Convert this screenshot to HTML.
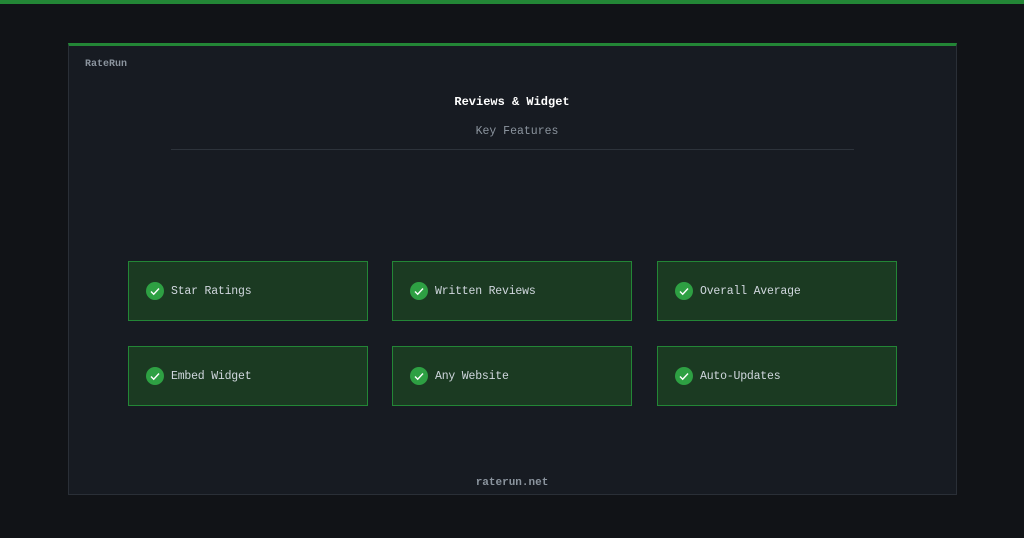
<!DOCTYPE html>
<html><head><style>
body{margin:0;width:1024px;height:538px;background:#111317;font-family:"Liberation Mono",monospace;position:relative;overflow:hidden}
.top{position:absolute;left:0;top:0;width:1024px;height:4px;background:#238636}
.card{position:absolute;left:68px;top:43px;width:887px;height:448px;background:#171b22;border:1px solid #2a2f37;border-top:3px solid #238636;box-sizing:content-box}
.abs{position:absolute;white-space:nowrap}
.box{position:absolute;width:238px;height:58px;background:#1b3a22;border:1px solid #238636}
.box .c{position:absolute;left:17px;top:20px;width:18px;height:18px;border-radius:50%;background:#2ea043}
.box .t{position:absolute;left:42px;top:23px;font-size:11.5px;color:#d0d7de;letter-spacing:-0.2px}
</style></head><body>
<div class="top"></div>
<div class="card"></div>
<div class="abs" style="left:85px;top:59px;font-size:10px;font-weight:bold;color:#8b949e">RateRun</div>
<div class="abs" style="left:0;width:1024px;text-align:center;top:95px;font-size:12px;font-weight:bold;color:#fff">Reviews &amp; Widget</div>
<div class="abs" style="left:0;width:1034px;text-align:center;top:125px;font-size:11.5px;color:#8b949e">Key Features</div>
<div class="abs" style="left:171px;top:149px;width:683px;height:1px;background:#2d333b"></div>
<div class="box" style="left:128px;top:261px"><div class="c"><svg width="18" height="18"><path d="M5 9.5l2.7 2.7L13 6.5" stroke="#fff" stroke-width="1.4" fill="none"/></svg></div><div class="t">Star Ratings</div></div>
<div class="box" style="left:392px;top:261px"><div class="c"><svg width="18" height="18"><path d="M5 9.5l2.7 2.7L13 6.5" stroke="#fff" stroke-width="1.4" fill="none"/></svg></div><div class="t">Written Reviews</div></div>
<div class="box" style="left:657px;top:261px"><div class="c"><svg width="18" height="18"><path d="M5 9.5l2.7 2.7L13 6.5" stroke="#fff" stroke-width="1.4" fill="none"/></svg></div><div class="t">Overall Average</div></div>
<div class="box" style="left:128px;top:346px"><div class="c"><svg width="18" height="18"><path d="M5 9.5l2.7 2.7L13 6.5" stroke="#fff" stroke-width="1.4" fill="none"/></svg></div><div class="t">Embed Widget</div></div>
<div class="box" style="left:392px;top:346px"><div class="c"><svg width="18" height="18"><path d="M5 9.5l2.7 2.7L13 6.5" stroke="#fff" stroke-width="1.4" fill="none"/></svg></div><div class="t">Any Website</div></div>
<div class="box" style="left:657px;top:346px"><div class="c"><svg width="18" height="18"><path d="M5 9.5l2.7 2.7L13 6.5" stroke="#fff" stroke-width="1.4" fill="none"/></svg></div><div class="t">Auto-Updates</div></div>
<div class="abs" style="left:0;width:1024px;text-align:center;top:477px;font-size:11px;font-weight:bold;color:#8b949e">raterun.net</div>
</body></html>
